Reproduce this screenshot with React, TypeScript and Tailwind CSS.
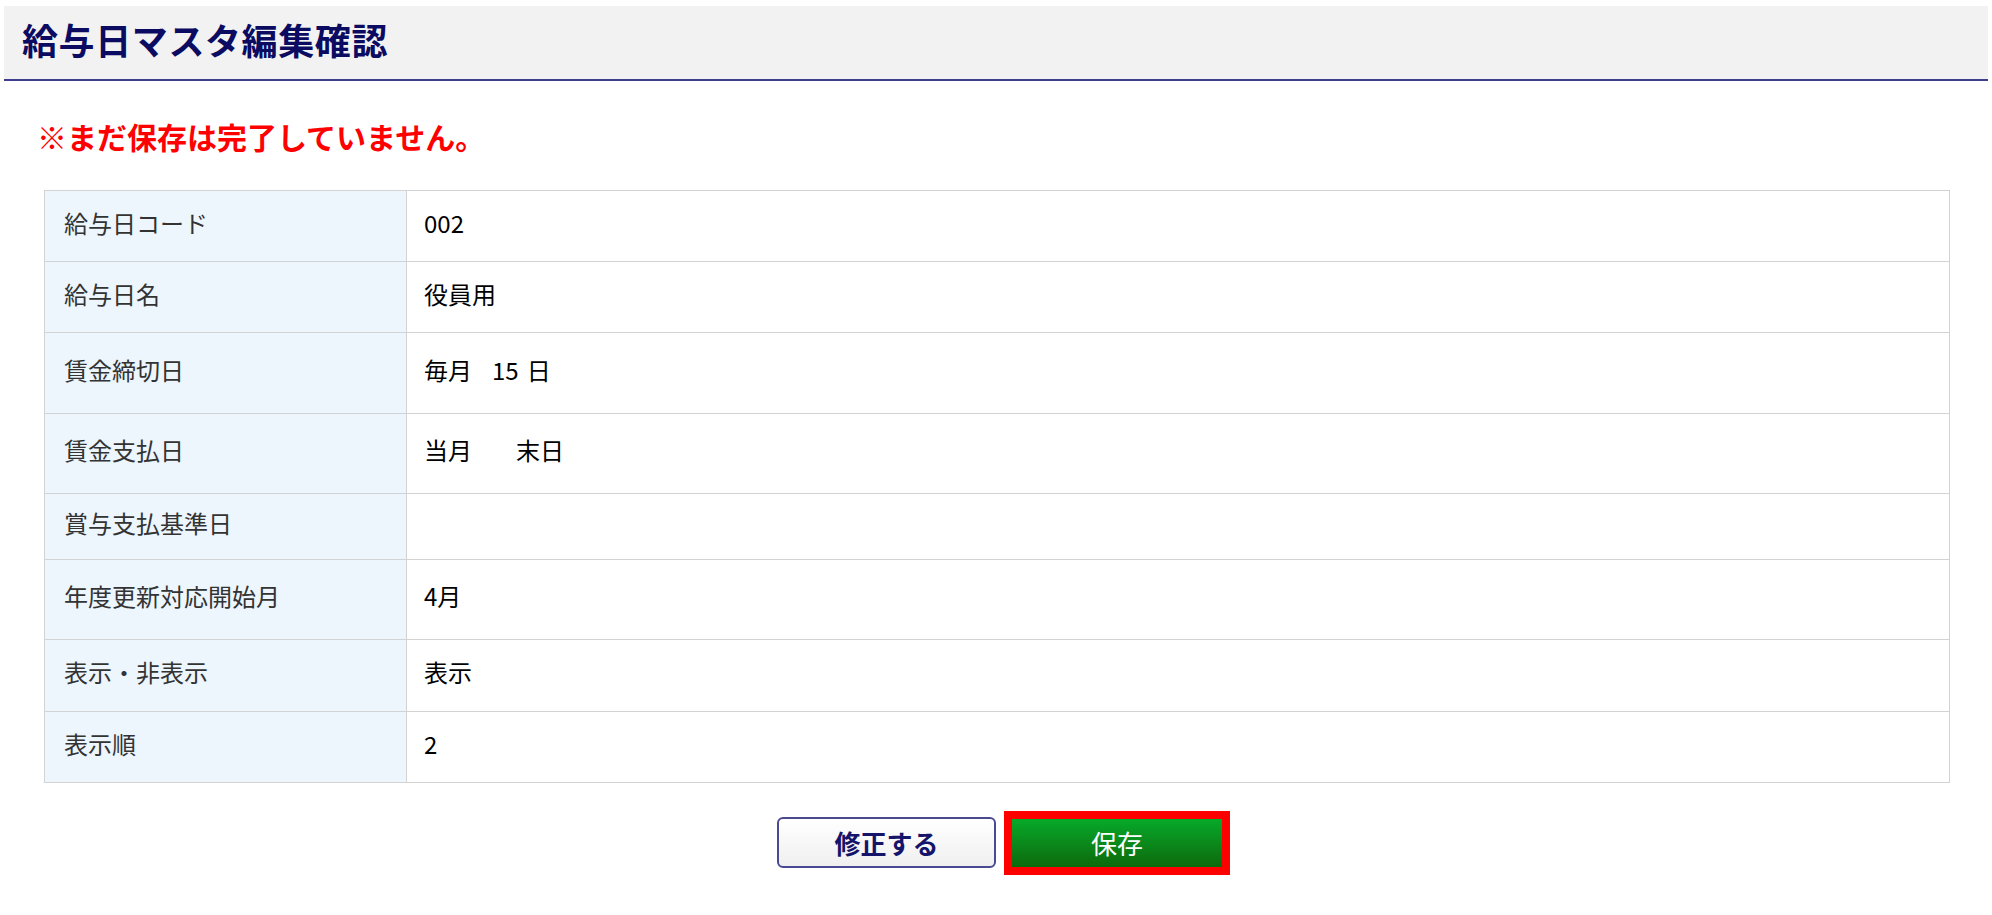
const rows: { label: string; value: React.ReactNode; h: string }[] = [
  { label: '給与日コード', value: '002', h: 'h-[71px]' },
  { label: '給与日名', value: '役員用', h: 'h-[71px]' },
  {
    label: '賃金締切日',
    value: (
      <>
        <span>毎月</span>
        <span className="ml-[20px]">15</span>
        <span className="ml-[8px]">日</span>
      </>
    ),
    h: 'h-[81px]',
  },
  {
    label: '賃金支払日',
    value: (
      <>
        <span>当月</span>
        <span className="ml-[44px]">末日</span>
      </>
    ),
    h: 'h-[80px]',
  },
  { label: '賞与支払基準日', value: '', h: 'h-[66px]' },
  { label: '年度更新対応開始月', value: '4月', h: 'h-[80px]' },
  { label: '表示・非表示', value: '表示', h: 'h-[72px]' },
  { label: '表示順', value: '2', h: 'h-[71px]' },
]

export default function App() {
  return (
    <div className="min-h-[915px] w-full bg-white font-['Noto_Sans_CJK_JP',sans-serif]">
      <div className="mx-[4px] pt-[6px]">
        <div className="flex h-[75px] items-center border-b-2 border-[#3e3e8e] bg-[#f2f2f2] pb-[8px] pl-[18px]">
          <h1 className="text-[36px] font-bold leading-none tracking-[0.6px] text-[#0b0b62]">給与日マスタ編集確認</h1>
        </div>
      </div>

      <p className="ml-[37px] mt-[37px] text-[30px] font-bold leading-[36px] text-[#ff0000]">※まだ保存は完了していません。</p>

      <div className="ml-[44px] mt-[36px] w-[1906px] border-x border-b border-[#d3d3d3]">
        {rows.map(r => (
          <div key={r.label} className={`flex border-t border-[#d3d3d3] ${r.h}`}>
            <div className="flex w-[362px] shrink-0 items-center border-r border-[#d3d3d3] bg-[#edf5fd] pb-[7px] pl-[19px] text-[24px] text-[#333333]">
              {r.label}
            </div>
            <div className="flex flex-1 items-center pb-[7px] pl-[17px] text-[24px] text-black">{r.value}</div>
          </div>
        ))}
      </div>

      <div className="mt-[34px] flex items-center justify-center gap-[16px] pl-[7px]">
        <button className="h-[51px] w-[219px] rounded-[6px] border-2 border-[#4a4a92] bg-gradient-to-b from-white to-[#f0f0f0] text-[26px] font-bold text-[#14146a]">
          修正する
        </button>
        <button className="h-[48px] w-[210px] bg-gradient-to-b from-[#05aa2a] to-[#0c6a0c] text-[26px] text-white outline outline-[8px] outline-[#ff0000]">
          保存
        </button>
      </div>
    </div>
  )
}
